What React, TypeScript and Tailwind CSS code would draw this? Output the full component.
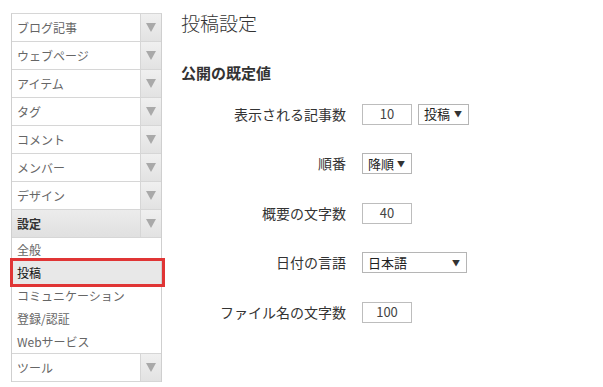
import React from "react";

const font = { fontFamily: '"Noto Sans CJK JP", "Noto Sans", sans-serif' };

const topItems = ["ブログ記事", "ウェブページ", "アイテム", "タグ", "コメント", "メンバー", "デザイン"];
const subItems = ["全般", "投稿", "コミュニケーション", "登録/認証", "Webサービス"];

function Arrow() {
  return (
    <div className="flex w-[21px] items-center justify-center border-l border-[#d6d6d6] bg-gradient-to-b from-[#f0f0f0] to-[#e2e2e2]">
      <svg width="10" height="9" viewBox="0 0 10 9">
        <path d="M0 0 H10 L5 9 Z" fill="#a9a9a9" />
      </svg>
    </div>
  );
}

function MenuRow({ label, bold }: { label: string; bold?: boolean }) {
  return (
    <div className={`flex h-[28px] border-b border-[#d6d6d6] ${bold ? "bg-gradient-to-b from-[#ececec] to-[#e0e0e0]" : "bg-white"}`}>
      <div className={`flex flex-1 items-center pl-[5px] text-[12px] ${bold ? "font-bold text-[#333]" : "text-[#666]"}`}>{label}</div>
      <Arrow />
    </div>
  );
}

function Select({ value, w }: { value: string; w: string }) {
  return (
    <div className={`flex h-[21px] ${w} items-center justify-between border border-[#b5b5b5] bg-white pl-[5px] pr-[6px] text-[13px] text-[#222]`}>
      <span>{value}</span>
      <span className="text-[8px] text-[#333]">▼</span>
    </div>
  );
}

function NumBox({ value }: { value: string }) {
  return (
    <div className="flex h-[21px] w-[50px] items-center justify-center border border-[#bdbdbd] bg-white text-[13px] text-[#444]">
      {value}
    </div>
  );
}

function FormRow({ label, children }: { label: string; children: React.ReactNode }) {
  return (
    <div className="flex h-[22px] items-center">
      <div className="w-[181px] pr-[16px] text-right text-[14px] text-[#333]">{label}</div>
      <div className="flex items-center gap-[6px]">{children}</div>
    </div>
  );
}

export default function App() {
  return (
    <div className="flex h-[387px] w-[603px] bg-white" style={font}>
      <div className="ml-[11px] mt-[13px] w-[151px] self-start">
        <div className="border border-b-0 border-[#cfcfcf] border-t-[#d6d6d6]">
          {topItems.map((t) => (
            <MenuRow key={t} label={t} />
          ))}
          <MenuRow label="設定" bold />
          <div className="bg-white">
            {subItems.map((t) => (
              <div
                key={t}
                className={`relative flex h-[23px] items-center pl-[5px] text-[12px] ${
                  t === "投稿" ? "bg-[#e8e8e8] text-[#111]" : "text-[#666]"
                }`}
              >
                {t}
                {t === "投稿" && (
                  <div className="pointer-events-none absolute -left-[2px] -right-[4px] -top-[3px] -bottom-[3px] border-[3px] border-[#e03535]" />
                )}
              </div>
            ))}
          </div>
          <div className="border-t border-[#d6d6d6]">
            <MenuRow label="ツール" />
          </div>
        </div>
      </div>

      <div className="ml-[19px] flex-1">
        <div className="mt-[9px] text-[19px] font-light text-[#333]">投稿設定</div>
        <div className="mt-[24px] text-[15px] font-bold text-[#333]">公開の既定値</div>
        <div className="mt-[19px] flex flex-col gap-[27.5px]">
          <FormRow label="表示される記事数">
            <NumBox value="10" />
            <Select value="投稿" w="w-[51px]" />
          </FormRow>
          <FormRow label="順番">
            <Select value="降順" w="w-[50px]" />
          </FormRow>
          <FormRow label="概要の文字数">
            <NumBox value="40" />
          </FormRow>
          <FormRow label="日付の言語">
            <Select value="日本語" w="w-[105px]" />
          </FormRow>
          <FormRow label="ファイル名の文字数">
            <NumBox value="100" />
          </FormRow>
        </div>
      </div>
    </div>
  );
}
